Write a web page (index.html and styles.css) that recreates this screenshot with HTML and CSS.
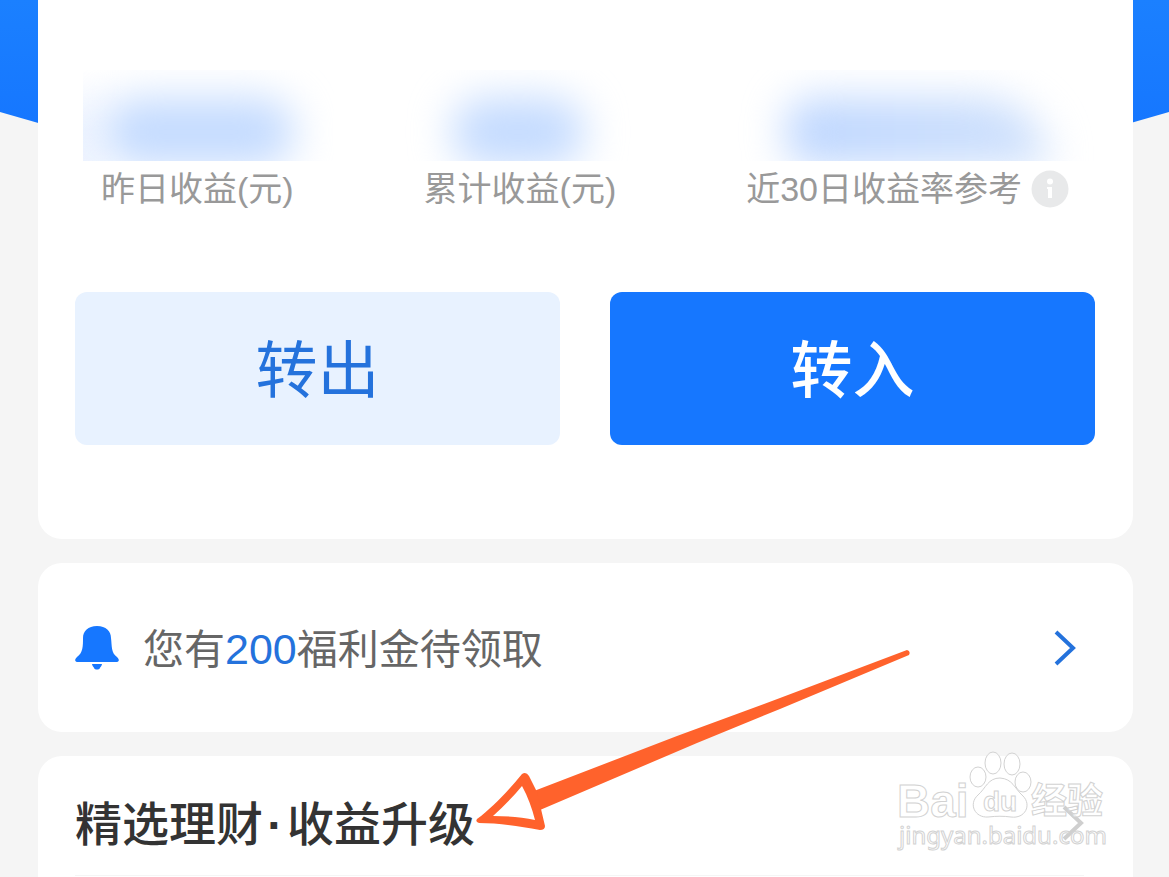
FILE: index.html
```html
<!DOCTYPE html>
<html lang="zh-CN">
<head>
<meta charset="utf-8">
<meta name="viewport" content="width=device-width, initial-scale=1">
<title>收益</title>
<link rel="stylesheet" href="styles.css">
</head>
<body>
<div class="backdrop"></div>
<main class="page">
  <section class="card summary">
    <div class="stats">
      <div class="stat">
        <div class="masked masked-first"><span class="smudge"></span></div>
        <span class="label">昨日收益(元)</span>
      </div>
      <div class="stat">
        <div class="masked masked-second"><span class="smudge"></span></div>
        <span class="label">累计收益(元)</span>
      </div>
      <div class="stat">
        <div class="masked masked-third"><span class="smudge"></span></div>
        <span class="label">近30日收益率参考
          <svg class="info" viewBox="0 0 38 38" aria-hidden="true"><circle cx="19" cy="19" r="18.500" fill="#e8e9ea"/><circle cx="19" cy="11.500" r="3" fill="#fff"/><path d="M16 17h5v11h-4V19h-1z" fill="#fff"/></svg>
        </span>
      </div>
    </div>
    <div class="actions">
      <button class="action action-out" type="button">转出</button>
      <button class="action action-in" type="button">转入</button>
    </div>
  </section>

  <a class="card notice" href="#">
    <svg class="bell" viewBox="0 0 44 46" aria-hidden="true"><path d="M22 1C13 1 8 6 8 13C8 21 8 28 2 32C-1 35 0 37 3 37H41C44 37 45 35 42 32C36 28 37 21 36 13C36 6 31 1 22 1z" fill="#1677ff"/><path d="M17 39h10c0 2-2 3-2 4c-1 2-5 2-6 0c0-1-2-2-2-4z" fill="#1677ff"/></svg>
    <span class="notice-text">您有<em>200</em>福利金待领取</span>
    <svg class="chevron" viewBox="0 0 22 36" aria-hidden="true"><path d="M2 2l17 16L2 34" fill="none" stroke="#2472dc" stroke-width="4"/></svg>
  </a>

  <section class="card featured">
    <div class="featured-head">
      <h2>精选理财<span class="dot">·</span>收益升级</h2>
      <svg class="chevron" viewBox="0 0 22 36" aria-hidden="true"><path d="M2 2l17 16L2 34" fill="none" stroke="#cfcfcf" stroke-width="4"/></svg>
    </div>
  </section>

  <svg class="arrow" viewBox="0 0 440 190" aria-hidden="true">
    <path d="M64 149L207 94L310 56L437 8Q441 9 439 13L310 67L227 101L70 168z" fill="#ff622c"/>
    <path d="M23 174L52 144L65 178z" fill="#fff"/>
    <path fill-rule="evenodd" d="M7 177C22 166 38 149 52 132Q56 129 59 134L67 150L75 184Q75 188 70 188C48 184 27 181 9 181Q5 180 7 177zM23 174C37 174 52 175 65 178C62 166 58 155 52 144C43 155 33 165 23 174z" fill="#ff622c"/>
  </svg>

  <svg class="watermark" viewBox="0 0 220 110" aria-hidden="true">
    <g class="mark">
      <text class="brand" x="5" y="67">Bai</text>
      <ellipse cx="86" cy="27" rx="8" ry="10"/>
      <ellipse cx="101" cy="13" rx="8" ry="11"/>
      <ellipse cx="120" cy="14" rx="8" ry="11"/>
      <ellipse cx="131" cy="32" rx="8" ry="10"/>
      <path d="M108 28C96 28 94 38 86 45C76 54 83 68 96 67C105 66 111 66 119 67C133 69 140 55 131 46C122 38 121 29 108 28z"/>
      <text class="du" x="91" y="61">du</text>
      <text class="brand-cn" x="139" y="64">经验</text>
      <text class="domain" x="7" y="94">jingyan.baidu.com</text>
    </g>
  </svg>
</main>
</body>
</html>
```

FILE: styles.css
```css
* {
  box-sizing: border-box;
}

body {
  margin: 0;
  background: #f5f5f5;
  color: #333;
  font-family: "Liberation Sans", "Noto Sans CJK SC", sans-serif;
}

.backdrop {
  position: absolute;
  inset: 0 0 auto;
  height: 280px;
  background: linear-gradient(#1b80ff, #1677ff 120px);
  clip-path: polygon(0 0, 100% 0, 100% 112px, 50% 280px, 0 112px);
}

.page {
  position: relative;
  display: flex;
  flex-direction: column;
  gap: 24px;
  min-height: 100vh;
  padding: 0 36px 0 38px;
  overflow: hidden;
}

.card {
  background: #fff;
  border-radius: 24px;
}

.summary {
  padding: 70px 38px 94px 37px;
  border-radius: 0 0 24px 24px;
}

.stats {
  display: flex;
  justify-content: space-between;
  padding: 0 26px;
}

.masked {
  height: 91px;
  margin: 0 -40px 0 -18px;
  overflow: hidden;
}

.masked-first {
  background: linear-gradient(#fff, transparent 60px), linear-gradient(90deg, #f0f5ff, #fff 40px);
}

.masked-second,
.masked-third {
  margin: 0 -40px;
}

.smudge {
  display: block;
  height: 68px;
  margin: 28px 40px 0 20px;
  border-radius: 32px;
  background: #c4dbff;
  filter: blur(20px);
}

.masked-second .smudge {
  margin: 28px 72px 0 68px;
}

.masked-third .smudge {
  margin: 28px 60px 0 80px;
  border-radius: 32px 80px 0 32px;
  background: linear-gradient(90deg, #bdd6ff, #cfe1fc);
}

.label {
  display: flex;
  align-items: center;
  gap: 9px;
  height: 56px;
  color: #999;
  font-size: 34px;
  line-height: 56px;
  white-space: nowrap;
}

.info {
  width: 38px;
  height: 38px;
}

.actions {
  display: grid;
  grid-template-columns: 1fr 1fr;
  gap: 50px;
  margin-top: 75px;
}

.action {
  height: 153px;
  padding: 6px 0 0;
  border: 0;
  border-radius: 12px;
  font-family: inherit;
  font-size: 62px;
  line-height: 80px;
}

.action-out {
  background: #e8f2ff;
  color: #2472dc;
}

.action-in {
  background: #1677ff;
  color: #fff;
  font-weight: 500;
}

.notice {
  display: flex;
  align-items: center;
  min-height: 169px;
  padding: 0 57px 0 37px;
  color: #666;
  text-decoration: none;
}

.bell {
  width: 44px;
  height: 46px;
}

.notice-text {
  flex: 1;
  padding-top: 4px;
  margin-left: 24px;
  font-size: 41px;
  line-height: 60px;
}

.notice-text em {
  color: #2472dc;
  font-size: 43px;
  font-style: normal;
}

.chevron {
  width: 22px;
  height: 36px;
}

.featured {
  flex: 1;
  padding: 0 49px 0 37px;
  border-radius: 24px 24px 0 0;
}

.featured-head {
  display: flex;
  align-items: center;
  justify-content: space-between;
  height: 120px;
  padding-top: 14px;
  border-bottom: 1px solid #f5f5f5;
}

.featured h2 {
  padding-top: 4px;
  margin: 0;
  font-size: 47px;
  font-weight: 500;
  line-height: 70px;
}

.dot {
  display: inline-block;
  width: 24px;
  font-weight: 700;
  text-align: center;
}

.arrow {
  position: absolute;
  top: 642px;
  left: 470px;
  width: 440px;
  height: 190px;
}

.watermark {
  position: absolute;
  top: 750px;
  right: 57px;
  width: 220px;
  height: 110px;
}

.mark {
  fill: #fff;
  fill-opacity: 0.6;
  stroke: #d2d2d2;
  stroke-width: 1;
}

.brand {
  font: bold 46px "Liberation Sans", sans-serif;
}

.du {
  font: bold 28px "Liberation Sans", sans-serif;
}

.brand-cn {
  font: bold 36px "Noto Sans CJK SC", sans-serif;
}

.domain {
  font: 24px "Noto Sans", sans-serif;
}
```
